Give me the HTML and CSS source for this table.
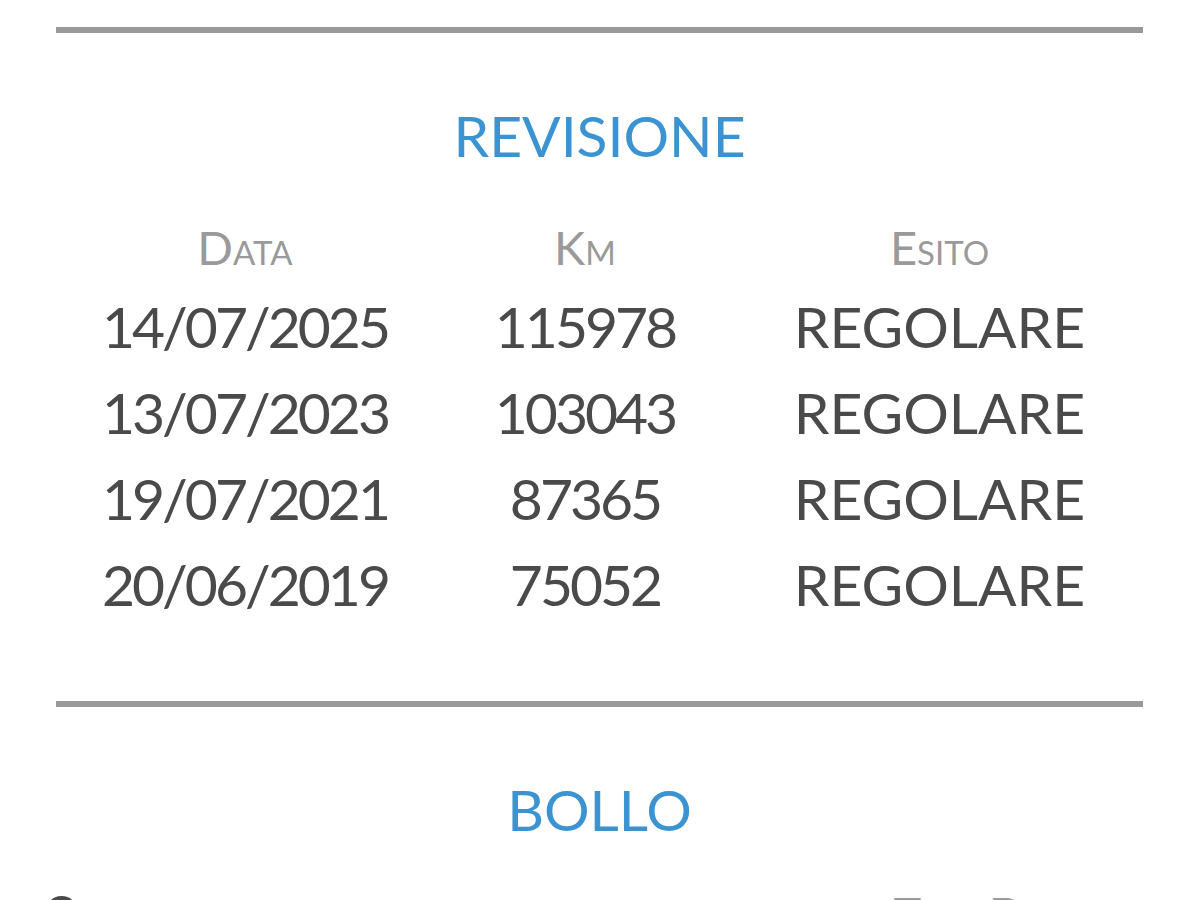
FILE: index.html
```html
<!DOCTYPE html>
<html lang="it">
<head>
<meta charset="utf-8">
<title>Revisione</title>
<link rel="stylesheet" href="styles.css">
</head>
<body>
<main class="page">
  <hr class="rule rule-top">
  <section class="section">
    <h2 class="title">REVISIONE</h2>
    <div class="table">
      <div class="head">Data</div>
      <div class="head">Km</div>
      <div class="head">Esito</div>

      <div class="cell num">14/07/2025</div>
      <div class="cell num">115978</div>
      <div class="cell">REGOLARE</div>

      <div class="cell num">13/07/2023</div>
      <div class="cell num">103043</div>
      <div class="cell">REGOLARE</div>

      <div class="cell num">19/07/2021</div>
      <div class="cell num">87365</div>
      <div class="cell">REGOLARE</div>

      <div class="cell num">20/06/2019</div>
      <div class="cell num">75052</div>
      <div class="cell">REGOLARE</div>
    </div>
  </section>
  <hr class="rule rule-mid">
  <section class="section">
    <h2 class="title">BOLLO</h2>
    <div class="bollo-row">
      <div class="bollo-left">Scorsa</div>
      <div class="bollo-right">Tipo Data</div>
    </div>
  </section>
</main>
</body>
</html>
```

FILE: styles.css
```css
html, body {
  margin: 0;
  padding: 0;
  background: #ffffff;
}

body {
  font-family: "Lato", "Open Sans", sans-serif;
  overflow: hidden;
  height: 900px;
}

.page {
  padding: 27px 57px 0 56px;
}

.rule {
  border: 0;
  margin: 0;
  height: 6px;
  background: #999999;
}

.rule-mid {
  margin-top: 74px;
}

.title {
  margin: 74px 0 0;
  font-size: 57px;
  line-height: 57px;
  font-weight: 400;
  color: #3b94d1;
  text-align: center;
}

.table {
  display: grid;
  grid-template-columns: 378px 302px 407px;
  margin-top: 60px;
}

.head {
  font-size: 47px;
  line-height: 47px;
  font-variant: small-caps;
  color: #9a9a9a;
  text-align: center;
  margin-bottom: 12px;
}

.cell {
  font-size: 57px;
  line-height: 86px;
  color: #4a4a4a;
  text-align: center;
}

.num {
  letter-spacing: -3px;
}

.bollo-row {
  display: flex;
  justify-content: space-between;
  align-items: flex-start;
  margin: 48px -11px 0 -11px;
}

.bollo-left {
  font-size: 57px;
  line-height: 57px;
  color: #4a4a4a;
}

.bollo-right {
  font-size: 47px;
  line-height: 57px;
  font-variant: small-caps;
  color: #9a9a9a;
  padding-right: 70px;
  margin-top: -1px;
}
```
